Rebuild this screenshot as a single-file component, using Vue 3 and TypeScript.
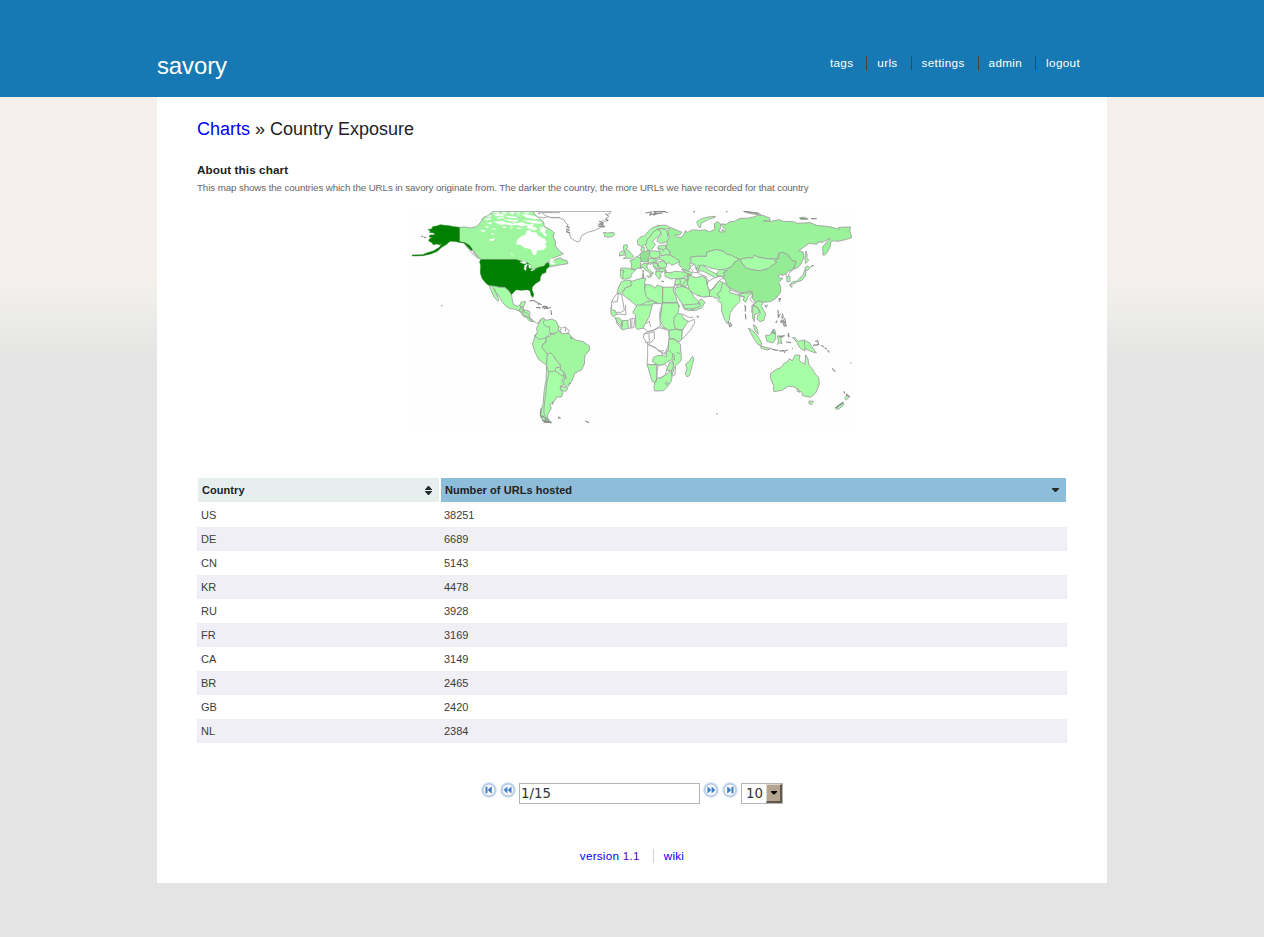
<script setup lang="ts">
import { ref } from 'vue'

interface Shape { d: string; k?: string }
interface Region { x: number; y: number; shapes: Shape[] }

const nav = ['tags', 'urls', 'settings', 'admin', 'logout']
const rows: [string, number][] = [
  ['US', 38251], ['DE', 6689], ['CN', 5143], ['KR', 4478], ['RU', 3928],
  ['FR', 3169], ['CA', 3149], ['BR', 2465], ['GB', 2420], ['NL', 2384],
]
const page = ref('1/15')
const size = ref('10')

// Every region has its own origin and uses units of a third of a pixel.
const regions: Region[] = [
  {
    x: 410, y: 205,
    shapes: [
      { k: 'mid', d: 'M148 67 165 66 185 69 200 64 213 51 219 38 237 30 246 20 370 19 376 30 392 43 402 54 402 64 422 74 433 84 429 96 436 108 436 122 448 138 460 146 448 152 432 158 420 166 404 178 410 184 390 186 365 194 350 172 318 164 214 164 204 158 194 146 184 130 168 114 148 111Z' },
      { k: 'mid', d: 'M420 168 440 162 452 158 456 164 470 166 474 176 448 180 428 184 420 186 412 182Z' },
      { k: 'sea', d: 'M350 78 358 74 366 82 378 82 386 94 404 102 410 112 404 118 410 126 400 134 382 136 377 150 370 150 366 140 362 132 344 128 332 120 318 118 322 104 334 94 346 90Z' },
      { k: 'sea', d: 'M222 42 242 39 244 43 228 46ZM250 28 278 27 282 32 258 33ZM286 32 322 36 318 40 296 38ZM334 28 364 31 380 36 390 42 376 42 350 38ZM252 50 278 48 286 52 310 56 336 52 350 58 372 58 368 63 350 61 334 64 320 59 304 62 290 58 270 59ZM280 42 310 45 326 44 322 49 300 49ZM338 45 378 47 396 52 390 56 364 54ZM354 61 376 67 384 72 372 76 362 72 350 68ZM212 74 226 76 224 80 214 79ZM238 103 256 100 250 107 240 108ZM242 86 252 84 250 89ZM302 141 306 148 310 156 306 150ZM276 64 290 66 282 70ZM318 68 338 69 328 72ZM260 38 275 40 266 43ZM398 64 408 72 404 84 412 90 404 94 398 84 388 78 394 74ZM418 168 424 160 434 164 426 170 436 174 430 180 422 176Z' },
      { k: 'sea', d: 'M247 22 266 21 268 26ZM274 21 294 23 282 28ZM298 22 314 21 308 30ZM317 22 332 23 326 28ZM340 21 362 23 350 28ZM230 33 244 31 240 37ZM267 35 286 36 278 40ZM306 50 318 52 310 54ZM390 66 396 70 390 74ZM230 54 246 52 242 58ZM226 63 238 65 230 69ZM246 70 258 72 250 75ZM300 66 310 68 304 71ZM322 30 332 34 324 33Z' },
      { k: 'us', d: 'M148 67 132 65 118 62 102 61 92 59 80 63 68 65 66 71 54 74 62 78 58 82 72 84 74 90 60 90 58 96 66 98 58 102 56 108 64 112 70 119 80 117 90 119 98 112 88 127 70 138 52 143 38 149 6 150 8 153 38 152 62 147 82 139 96 126 110 118 120 109 132 109 148 112 162 114 170 123 184 137 187 133 178 121 166 114 148 110Z' },
      { k: 'us', d: 'M212 164 318 164 334 169 348 171 362 180 364 194 372 195 384 188 402 184 411 174 416 174 418 184 408 194 408 202 396 207 391 217 390 227 376 236 367 246 366 255 371 267 369 277 364 273 360 257 352 254 334 256 318 254 308 265 304 269 296 256 284 247 268 247 254 243 238 242 228 235 216 220 211 204 212 182 209 170Z' },
      { k: 'sea', d: 'M329 171 344 168 351 174 342 177ZM344 180 353 177 349 187 348 197 342 193ZM353 177 363 181 362 191 356 187 357 182ZM361 196 375 192 367 198Z' },
      { k: 'line', d: 'M187 133 204 156 212 164M164 118 184 142 204 160' },
      { k: 'low', d: 'M238 242 254 244 268 247 284 247 295 257 305 270 307 286 310 298 322 304 330 300 334 291 347 290 342 302 337 307 332 309 326 317 312 312 298 310 284 300 276 289 271 280 258 262 251 248 259 267 267 285 264 289 253 277 244 258Z' },
      { k: 'low', d: 'M326 317 332 309 340 308 342 315 357 318 360 324 358 340 370 346 368 350 358 348 350 338 340 334 334 324Z' },
      { k: 'line', d: 'M328 316 338 324 343 314M340 324 347 334 357 332M336 306 342 306' },
      { k: 'isle', d: 'M358 288 370 286 384 294 395 299M384 306 392 310M397 307 402 303 411 305 413 310 400 309M418 307 423 309M34 94 40 95M42 97 48 98M94 301 97 303M383 297 388 298' },
      { k: 'line', d: 'M370 19 390 20 384 27 395 23 412 35 430 39 450 37M395 22 430 23 450 23M386 36 400 39 416 34' },
    ],
  },
  {
    x: 550, y: 205,
    shapes: [
      { k: 'line', d: 'M-40 19H183L180 25 172 29 177 35 168 39 175 45 166 50 160 46 154 50 161 55 145 58 148 64 160 60 164 65 151 68 132 77 113 82 96 91 90 105 86 111 76 108 63 99 57 84 50 77 58 70 49 64 55 60 47 54 43 45 30 39 14 37 0 38' },
      { k: 'isle', d: 'M147 49 158 53 149 57 160 59M166 26 174 32M48 71 59 77M48 80 61 84M50 65 59 67M166 42 174 48M145 64 164 64' },
      { k: 'low', d: 'M159 84 165 82 172 84 190 82 195 88 188 94 174 97 162 93 166 88Z' },
      { k: 'low', d: 'M221 121 231 119 233 127 228 133 237 138 245 148 251 153 248 159 230 160 220 161 230 154 224 151 229 144 224 139 220 131ZM215 138 224 138 222 150 208 153 210 143Z' },
      { k: 'low', d: 'M262 106 270 97 283 93 295 79 306 69 325 62 343 60 358 65 361 71 345 72 333 70 322 73 308 83 300 96 291 104 290 116 276 124 264 120Z' },
      { k: 'low', d: 'M291 104 300 96 308 83 322 73 332 79 329 91 316 101 307 111 316 118 310 128 302 137 294 136 287 122 290 112Z' },
      { k: 'low', d: 'M322 73 334 71 346 73 351 80 354 98 358 103 345 113 331 115 321 108 323 101 334 90 332 79Z' },
      { k: 'low', d: 'M326 123 346 120 350 132 361 141 356 149 337 152 330 144 326 136Z' },
      { k: 'low', d: 'M276 125 284 127 282 136 278 140 272 136ZM326 123 323 130 337 133 350 131M337 133 340 141' },
      { k: 'de', d: 'M273 144 280 140 294 137 299 143 299 154 293 160 296 168 284 171 274 169 272 160 270 151Z' },
      { k: 'mid', d: 'M240 166 252 163 259 154 273 160 273 169 271 181 273 190 262 190 257 194 243 190 245 177Z' },
      { k: 'low', d: 'M299 140 312 137 330 141 329 155 318 160 303 158 299 152Z' },
      { k: 'low', d: 'M329 153 345 150 361 150 374 156 388 163 389 169 375 177 366 181 357 173 349 178 343 168 329 163Z' },
      { k: 'low', d: 'M296 160 312 160 326 162 320 169 308 174 294 174ZM325 171 341 168 350 180 348 188 333 191 322 181ZM326 190 344 190 348 196 334 201 327 198ZM308 176 320 171 324 184 322 196 313 190Z' },
      { k: 'low', d: 'M273 181 282 175 295 177 290 183 293 191 303 199 312 206 304 205 306 212 299 218 290 214 302 212 300 203 286 195 280 186 273 190Z' },
      { k: 'low', d: 'M212 190 230 189 244 193 257 195 248 203 244 209 242 218 230 222 216 222 211 214Z' },
      { k: 'line', d: 'M212 195 222 197 218 210 220 221' },
      { k: 'isle', d: 'M278 195 281 202M278 203 281 213 276 210M318 197 321 207 331 213M334 228 342 230M388 228 379 229M275 217 283 216' },
      { k: 'low', d: 'M317 202 328 198 338 201 329 207 334 213 328 223 323 217 317 209Z' },
      { k: 'low', d: 'M344 202 360 203 377 199 398 201 415 203 412 214 391 221 375 220 364 222 346 215ZM343 196 350 198 347 203Z' },
      { k: 'low', d: 'M394 193 412 197 427 203 425 209 411 205ZM412 206 421 210 425 218 413 216Z' },
      { k: 'low', d: 'M214 230 226 226 243 226 244 242 226 249 210 266 201 264 205 249Z' },
      { k: 'low', d: 'M243 230 260 224 276 220 288 220 284 231 284 251 294 281 302 289 263 305 216 267 226 249 244 242Z' },
      { k: 'low', d: 'M287 238 306 241 315 250 322 240 338 246 337 300 303 285 289 275 284 256ZM338 246 357 247 372 246 369 255 378 275 382 294 338 292Z' },
      { k: 'low', d: 'M338 292 381 293 389 302 380 318 383 340 332 340 337 319ZM299 290 303 286 336 302 333 337 302 340 300 318 256 336 263 305 290 290Z' },
      { k: 'line', d: 'M202 265 215 268 223 316 213 322 198 322 184 316 185 291 193 276ZM185 291 202 290 205 265M184 318 192 330M369 255 374 247 373 237' },
      { k: 'low', d: 'M374 238 377 223 390 221 409 221 414 237 402 246 388 240 380 244ZM378 248 398 244 418 252 432 275 447 291 445 303 419 317 403 313 393 291 382 275 374 257ZM446 290 453 281 465 292 455 309 435 317 423 316 445 304Z' },
      { k: 'low', d: 'M414 210 424 213 435 225 445 217 456 219 469 226 472 244 479 256 483 272 466 276 444 272 426 255 416 246 412 230Z' },
      { k: 'line', d: 'M390 222 391 236 374 241M391 236 413 250M399 238 411 221M308 170 324 178 330 190M311 181 320 191M288 174 303 178 311 169M303 157 320 168M320 60 329 63M262 155 273 145M422 184 431 180 428 173 441 177 438 190 445 203 431 203 425 194 419 187' },
      { k: 'isle', d: 'M286 24 304 21 300 29 319 25 312 20 344 20 353 23M299 31 308 27M310 31 321 26 338 24M430 20 435 20' },
    ],
  },
  {
    x: 700, y: 205,
    shapes: [
      { k: 'ru', d: 'M-98 78-88 68-68 76-54 82-62 91-76 89-68 97-55 97-47 85-43 76-38 83-25 75-10 75 0 77 14 74 29 81 40 75 44 73 43 56 53 50 62 57 61 71 56 79 66 82 67 72 75 82 76 74 68 66 64 57 80 58 87 51 104 49 120 40 141 40 165 35 173 30 188 31 209 39 210 48 190 48 213 49 238 44 250 49 281 50 291 55 331 53 350 61 394 66 417 73 415 67 452 66 449 75 455 98 440 103 414 109 400 107 391 113 391 124 382 142 373 151 369 150 368 125 382 109 391 100 366 112 354 111 350 118 328 115 311 127 296 137 309 141 312 156 303 177 293 188 279 193 284 183 288 170 275 166 263 149 247 142 236 145 232 162 199 161 177 157 163 151 158 159 143 158 119 164 97 156 92 150 79 147 68 137 49 134 21 141 19 154-8 154-28 156-25 166-31 174-29 189-36 199-49 192-64 180-61 168-78 157-90 150-89 140-101 128-98 106-91 98Z' },
      { k: 'low', d: 'M-28 156-8 154 19 154 21 141 49 134 68 138 79 147 92 150 118 163 102 173 96 184 82 191 61 195 46 192 33 190 10 180-2 191-12 190-16 177-27 176Z' },
      { k: 'low', d: 'M120 163 143 158 158 159 163 151 177 157 199 161 220 162 232 171 212 184 205 191 181 197 159 195 138 189 126 174Z' },
      { k: 'cn', d: 'M118 163 126 174 138 189 159 195 181 197 205 191 212 184 231 172 223 167 236 160 236 145 247 142 263 149 275 166 288 170 284 183 277 195 265 199 257 207 246 212 244 207 235 212 237 219 249 220 236 232 242 245 242 261 228 280 211 290 187 292 176 288 166 293 158 281 157 261 143 261 124 263 112 259 90 249 79 237 73 220 63 208 80 197 82 191 96 184 102 173Z' },
      { k: 'low', d: 'M260 214 270 215 270 229 261 230Z' },
      { k: 'line', d: 'M277 195 265 208 268 215M257 207 260 214' },
      { k: 'low', d: 'M315 187 322 183 330 188 325 195 316 196ZM318 194 316 213 306 226 292 230 282 236 272 237 277 230 292 228 300 218 308 214 313 197ZM270 238 277 242 275 247 269 242Z' },
      { k: 'low', d: 'M318 138 322 151 320 158 326 166 320 173 316 175 315 158Z' },
      { k: 'low', d: 'M0 69 4 54 26 43 45 37 47 34 24 36 4 41-10 50-7 59ZM131 19 146 20 153 22 176 25 184 30 165 28 148 25ZM298 39 311 36 325 42 304 44Z' },
      { k: 'isle', d: 'M333 41 350 41M332 185 341 181M131 19 176 25M300 40 322 42M78 19 82 20' },
      { k: 'low', d: 'M0 180 12 183 25 194 45 205 55 212 48 218 39 214 25 207 9 198-5 198ZM48 207 58 195 67 194 81 197 69 204 76 210 63 215Z' },
      { k: 'line', d: 'M0 220 17 216 24 226 17 251 28 259 42 247 51 233 65 222 73 220M28 258 20 246 24 230 39 221 50 216 61 213 71 218M-2 180-12 190-2 207 20 215' },
      { k: 'low', d: 'M-31 211-12 218 6 213 18 221 22 242 29 260 28 274 11 276-13 269-32 255-38 234ZM28 259 43 249 50 235 58 228 68 232 72 241 62 258 51 267 59 277 49 281 37 274 29 275Z' },
      { k: 'low', d: 'M68 232 79 239 91 253 88 262 116 271 119 266 143 264 147 256 156 262 143 277 137 292 128 285 134 276 119 273 120 289 111 298 98 312 90 326 88 346 81 356 73 341 65 318 65 295 53 287 60 278 51 268 62 258Z' },
      { k: 'line', d: 'M90 254 115 264 119 272M143 266 154 260 157 273 150 284 159 293 168 298 156 300 155 323M134 300 138 314M118 268 135 278' },
      { k: 'isle', d: 'M136 303 136 320' },
      { k: 'low', d: 'M158 301 174 288 190 292 184 302 189 313 197 326 192 346 180 350 172 343 172 332 181 325 177 314 166 302ZM158 303 173 307 179 322 164 329 163 350 158 340ZM194 302 202 300 199 308ZM238 280 242 282 238 291Z' },
    ],
  },
  {
    x: 520, y: 305,
    shapes: [
      { k: 'low', d: 'M70 39 61 43 55 59 50 69 52 84 45 93 41 108 37 117 47 146 57 164 80 181 82 145 75 139 66 128 70 116 78 112 78 97 92 85 114 84 116 65 108 48 96 42 79 46Z' },
      { k: 'low', d: 'M121 244 135 246 143 252 137 259 124 257Z' },
      { k: 'br', d: 'M78 97 90 94 92 87 105 87 116 75 128 86 147 85 153 95 167 105 190 110 209 124 209 135 195 151 193 177 185 194 164 205 158 224 142 248 133 240 125 232 138 218 132 202 121 194 120 178 109 167 100 151 92 144 82 148 75 139 66 128 70 116 78 112Z' },
      { k: 'low', d: 'M82 148 92 144 100 151 109 167 120 178 121 194 132 202 138 218 125 224 132 238 121 244 121 254 129 263 124 276 110 276 106 285 98 292 90 299 94 309 84 327 82 340 94 351 79 353 71 346 62 338 63 319 69 298 73 254 78 227 80 181Z' },
      { k: 'line', d: 'M69 40 73 44 70 55 78 65 90 66 88 79 92 87M52 84 43 92 57 103 70 101 78 97M80 181 87 204 81 230 77 269 72 307 72 326 80 339M87 201 105 198 123 210 138 218M105 198 107 188 119 187M132 202 130 215M115 63 124 69 119 80 128 86M127 68 138 66 136 80M139 68 149 79 142 84' },
      { k: 'isle', d: 'M84 340 84 350 66 346 95 354M63 310 61 330 68 339M114 337 122 340M117 335 116 341M195 348 202 350 206 354M100 290 97 298M67 332 79 343 73 352 89 349M148 238 151 234M151 96 156 102' },
      { k: 'low', d: 'M0 2 10 8 12 21 22 25 28 32 30 42 24 36 10 30 8 18Z' },
      { k: 'line', d: 'M28 35 36 49 45 51 50 55 57 53 64 45' },
      { k: 'isle', d: 'M48 7 58 9M67 9 73 4 84 9 72 11M93 16 95 30' },
      { k: 'low', d: 'M273 15 285 16 290 29 279 35 273 27ZM284 38 299 40 307 48 307 64 294 55ZM307 47 323 46 325 70 307 74 302 64Z' },
      { k: 'line', d: 'M271 13 276 0M289 27 318 29 316 0M290 43 289 53 300 68 307 74M324 47 335 40 345 40 341 68 325 70M331 43 331 68M336 40 335 68' },
      { k: 'low', d: 'M352 0 398 0 397 15 383 50 373 69 352 73 347 68 347 30 338 22Z' },
      { k: 'white', d: 'M398-4 427-4 419 23 421 62 400 76 382 80 370 67 388 34ZM382 80 400 76 419 68 446 76 448 99 444 125 434 147 416 136 406 127 384 118 370 98 372 87ZM383 118 406 129 416 138 427 144 427 151 415 169 415 179 381 178 383 154Z' },
      { k: 'line', d: 'M371 87 387 84 388 113 376 112M388 84 403 80 403 102 388 116M421 63 437 72M379 56 388 48 392 66M416 138 432 137M432 143 440 150' },
      { k: 'low', d: 'M427-6 473-6 477 8 474 24 463 37 463 57 466 75 446 76 430 65 420 47Z' },
      { k: 'low', d: 'M462 59 462 38 473 25 486 28 491 42 512 52 502 65 488 75 467 72ZM447 76 466 73 487 76 485 102 478 111 463 102 448 101ZM447 101 462 102 481 118 483 145 484 166 470 179 463 188 456 211 453 194 461 179 458 168 442 151 445 127Z' },
      { k: 'white', d: 'M502 52 522 43 524 54 511 76 485 103 487 77ZM415 181 434 178 443 188 436 209 420 220 410 223 411 199Z' },
      { k: 'low', d: 'M381 178 410 180 410 222 407 233 397 230 388 201ZM397 170 400 158 412 152 427 151 440 155 439 140 447 136 458 147 456 164 443 170 430 179 415 180ZM443 188 449 172 459 171 460 184 455 198 439 195ZM404 234 409 226 410 219 424 219 438 209 453 196 456 216 454 228 441 247 431 257 404 258 402 249Z' },
      { k: 'line', d: 'M435 236 440 230 445 234 440 240ZM458 144 462 149 464 166 459 163M470 142 480 146M466 185 465 210 457 213M487 26 506 37 520 37' },
      { k: 'low', d: 'M517 154 522 162 517 177 509 211 501 216 496 205 501 193 497 177 509 168Z' },
      { k: 'low', d: 'M489 0 540-4 540 4 520 11 494 11Z' },
      { k: 'isle', d: 'M530 35 536 34' },
    ],
  },
  {
    x: 695, y: 290,
    shapes: [
      { k: 'low', d: 'M227 250 246 237 258 233 267 220 276 216 283 206 292 212 297 202 301 195 315 196 312 210 320 217 330 223 332 194 339 207 342 225 352 236 358 248 371 263 373 283 362 309 347 322 323 317 321 307 308 301 300 291 281 289 260 301 237 305 235 299 236 287 226 265ZM342 333 355 334 350 344 342 341Z' },
      { k: 'line', d: 'M307 294 314 307 305 303' },
      { k: 'low', d: 'M160 114 172 121 188 138 199 157 199 168 188 163 177 147ZM175 104 184 110 190 132 182 126 178 116Z' },
      { k: 'low', d: 'M197 169 213 172 229 176 216 180 199 175ZM211 136 226 135 231 124 237 117 242 125 242 147 233 159 216 154Z' },
      { k: 'low', d: 'M247 138 254 137 256 143 265 139 257 147 261 161 253 158 248 164 250 150ZM302 147 310 154 328 150 345 160 351 171 364 189 347 184 331 176 329 183 315 174 305 157 293 143 301 143Z' },
      { k: 'line', d: 'M328 150 330 180' },
      { k: 'isle', d: 'M252 140 269 137M280 129 282 142 278 135M273 156 288 158M231 178 239 179 244 181 250 180M252 183 263 182 271 183 279 180M267 187 270 187M236 119 232 128 241 130M291 174 293 176M354 166 371 164 368 153 361 154M379 166 386 171M389 173 395 177M397 180 403 187M411 235 421 245M466 219 469 220M242 99 247 92M249 60 250 81 256 72M262 71 265 82M263 89 274 107 268 108 263 97 259 91 257 99M269 84 272 100M265 86 259 80M251 29 257 25' },
      { k: 'low', d: 'M421 353 435 342 444 336 447 343 433 356 424 358ZM449 325 456 314 458 320 464 320 454 330Z' },
      { k: 'isle', d: 'M446 304 450 311M64 370 67 373M100 95 104 110 110 106 105 97M151 72 153 88M8 80 11 81M453 312 464 320M422 354 445 338' },
    ],
  },
]
</script>

<template>
  <div class="page">
    <header>
      <div class="bar">
        <h1>savory</h1>
        <nav><a v-for="n in nav" :key="n">{{ n }}</a></nav>
      </div>
    </header>
    <main>
      <h2><a>Charts</a> » Country Exposure</h2>
      <h3>About this chart</h3>
      <p class="about">This map shows the countries which the URLs in savory originate from. The darker the country, the more URLs we have recorded for that country</p>
      <svg class="map" viewBox="412 211 440 220">
        <g v-for="(r, i) in regions" :key="i" :transform="`translate(${r.x} ${r.y}) scale(.33333)`">
          <path v-for="(s, j) in r.shapes" :key="j" :d="s.d" :class="s.k" />
        </g>
      </svg>
      <div class="table">
        <div class="row head">
          <b>Country
            <svg width="7" height="9" viewBox="0 0 7 9"><path d="M0 4V3.5L3 0H4L7 3.5V4ZM0 5H7V5.5L4 9H3L0 5.5Z" /></svg>
          </b>
          <b class="sorted">Number of URLs hosted
            <svg width="7" height="9" viewBox="0 0 7 9"><path d="M0 2H7V3L4 6H3L0 3Z" /></svg>
          </b>
        </div>
        <div v-for="r in rows" :key="r[0]" class="row"><span>{{ r[0] }}</span><span>{{ r[1] }}</span></div>
      </div>
      <form class="pager" @submit.prevent>
        <svg class="btn" viewBox="0 0 16 16"><circle cx="8" cy="8" r="7.8" /><circle class="in" cx="8" cy="8" r="6" /><path d="M4.5 4.8H6.5V11.2H4.5ZM6.8 8 9 5.8 10.8 4.6V11.4L9 10.2Z" /></svg>
        <svg class="btn" viewBox="0 0 16 16"><circle cx="8" cy="8" r="7.8" /><circle class="in" cx="8" cy="8" r="6" /><path d="M3.6 8 7.4 4.6V11.4ZM7.7 8 11.5 4.6V11.4Z" /></svg>
        <input v-model="page" type="text">
        <svg class="btn flip" viewBox="0 0 16 16"><circle cx="8" cy="8" r="7.8" /><circle class="in" cx="8" cy="8" r="6" /><path d="M3.6 8 7.4 4.6V11.4ZM7.7 8 11.5 4.6V11.4Z" /></svg>
        <svg class="btn flip" viewBox="0 0 16 16"><circle cx="8" cy="8" r="7.8" /><circle class="in" cx="8" cy="8" r="6" /><path d="M4.5 4.8H6.5V11.2H4.5ZM6.8 8 9 5.8 10.8 4.6V11.4L9 10.2Z" /></svg>
        <div class="select">
          <span>{{ size }}</span>
          <i><svg width="6" height="4" viewBox="0 0 6 4"><path d="M0 0H6V1L3.5 3.5H2.5L0 1Z" /></svg></i>
        </div>
      </form>
      <footer><a>version <span class="num">1.1</span></a><a>wiki</a></footer>
    </main>
  </div>
</template>

<style>
body { margin: 0; background: #e4e4e4; }
</style>

<style scoped>
.page { min-height: 937px; font-family: "Liberation Sans", Arial, sans-serif; color: #222; background: linear-gradient(#f5f0ed 275px, #f0efeb 295px, #e4e4e4 362px); }
header { height: 97px; background: #1779b3; }
.bar { width: 950px; margin: 0 auto; display: flex; justify-content: space-between; color: #fff; }
h1 { margin: 52px 0 0; font-size: 24px; line-height: 28px; font-weight: 400; letter-spacing: -.13px; }
nav { display: flex; margin: 56px 27px 0 0; font-size: 11.7px; line-height: 14px; }
nav a { height: 14px; letter-spacing: .34px; }
nav a + a { margin-left: 13px; padding-left: 10px; border-left: 1px solid #444; }
main { box-sizing: border-box; width: 950px; height: 786px; margin: 0 auto; padding: 20px 40px 0; background: #fff; display: flex; flex-direction: column; }
h2 { margin: 0; font-size: 18px; line-height: 24px; font-weight: 400; }
h2 a, footer a { color: #00f; }
h3 { margin: 22px 0 0; font-size: 11.7px; line-height: 14px; letter-spacing: .1px; }
.about { margin: 5px 0 0; font-size: 9.75px; line-height: 12px; letter-spacing: -.1px; color: #666; white-space: nowrap; }
.map { display: block; width: 440px; height: 220px; margin: 17px 0 0 215px; background: #fefefe; flex: none; }
.map path { stroke: #a0a0a0; stroke-width: 2.7; fill: #a6ffa6; }
.map .line { fill: none; }
.map .isle { fill: none; stroke: #8c8c8c; stroke-width: 3.4; }
.map .white { fill: #fefefe; }
.map .sea { fill: #fefefe; stroke: #fefefe; stroke-width: .6; }
.map .us { fill: #008000; stroke: #168016; stroke-width: 1.5; }
.map .mid { fill: #9ef69e; }
.map .br { fill: #a0f7a0; }
.map .ru { fill: #9af29a; }
.map .cn { fill: #94ec94; }
.map .de { fill: #8fe58f; }
.table { margin-top: 46px; font-size: 11px; color: #3d3d3d; }
.row { display: grid; grid-template-columns: 243px 627px; height: 24px; line-height: 24px; }
.row:nth-child(odd) { background: #f0eff6; }
.row span { padding-left: 4px; letter-spacing: -.05px; }
.row.head { height: 26px; background: #fff; color: #222; }
.head b { display: flex; justify-content: space-between; align-items: center; margin: 1px; padding: 0 7px 0 4px; letter-spacing: .06px; background: #e6eeee; }
.head b.sorted { background: #8dbdd8; }
.head path { fill: #232b2b; }
.pager { display: flex; align-items: flex-start; margin: 38px 0 0 284px; height: 24px; }
.btn { width: 16px; height: 16px; margin: 1px 3px 0 0; }
.btn circle { fill: #c9def7; }
.btn .in { fill: #f6f9fd; stroke: #9aa9bc; stroke-width: .7; }
.btn path { fill: #3f7cc4; }
.flip { transform: scaleX(-1); }
.pager input { box-sizing: border-box; width: 181px; height: 21px; margin: 2px 3px 0 0; padding: 0 1px; border: 1px solid #b5b5b5; font: 13.33px "DejaVu Sans", sans-serif; color: #333; outline: 0; }
.select { box-sizing: border-box; display: flex; width: 42px; height: 21px; margin-top: 2px; border: 1px solid #b5b5b5; font: 13.33px/19px "DejaVu Sans", sans-serif; color: #333; }
.select span { width: 20px; padding-left: 4px; }
.select i { box-sizing: border-box; width: 16px; height: 19px; padding-bottom: 1px; display: grid; place-items: center; background: #b5a590; border: 1px solid; border-color: #ddd8cf #62584c #62584c #ddd8cf; border-right-width: 2px; border-bottom-width: 2px; }
.select path { fill: #000; }
footer { display: flex; justify-content: center; margin: 44px 0 0; font-size: 11.7px; line-height: 14px; letter-spacing: .25px; }
footer a + a { margin-left: 13px; padding-left: 10px; border-left: 1px solid #ccc; }
.num { color: #50c; }
</style>
